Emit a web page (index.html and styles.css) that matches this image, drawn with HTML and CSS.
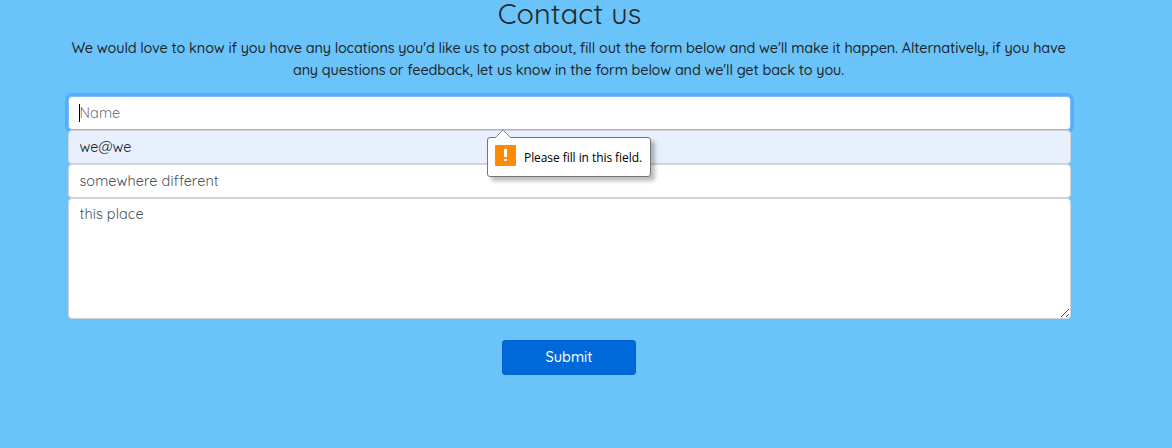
FILE: index.html
```html
<!DOCTYPE html>
<html lang="en">
<head>
<meta charset="utf-8">
<title>Contact us</title>
<link rel="stylesheet" href="styles.css">
</head>
<body>
<main class="contact">
  <h1 class="title">Contact us</h1>
  <p class="intro"><span class="line-one">We would love to know if you have any locations you'd like us to post about, fill out the form below and we'll make it happen. Alternatively, if you have</span><br><span class="line-two">any questions or feedback, let us know in the form below and we'll get back to you.</span></p>
  <form class="form">
    <div class="field focused"><span class="caret"></span><span class="name">Name</span>
      <div class="tip"><svg class="arrow" width="18" height="9" viewBox="0 0 18 9"><path d="M1 9 9 1l8 8" fill="#fff" stroke="#8a8a8a"/></svg><svg class="warn" width="21" height="21" viewBox="0 0 21 21"><rect width="21" height="21" rx="1" fill="#ff8c00"/><path d="M9 4h3v8H9zM9 14h3v2H9z" fill="#fff"/></svg><span class="tip-text">Please fill in this field.</span></div>
    </div>
    <div class="field filled"><span class="email">we@we</span></div>
    <div class="field"><span class="place">somewhere different</span></div>
    <div class="field message"><span class="note">this place</span><svg class="grip" width="10" height="10" viewBox="0 0 10 10"><path d="M1 9 9 1M6 9l3-3" stroke="#555" fill="none"/></svg></div>
    <button class="submit" type="button">Submit</button>
  </form>
</main>
</body>
</html>
```
FILE: styles.css
```css
* { box-sizing: border-box; }
body { margin: 0; background: #6ac4f9; font-family: Quicksand, Lato, "Liberation Sans", sans-serif; color: #212529; }
.contact { width: 1003px; margin-left: 68px; height: 448px; }
.title { margin: 0; height: 37px; font-size: 28.8px; line-height: 26px; font-weight: 380; text-align: center; letter-spacing: 0.12px; }
.intro { margin: 0 1px 0 -1px; height: 59px; font-size: 14.4px; line-height: 22px; font-weight: 500; text-align: center; white-space: nowrap; letter-spacing: -0.12px; }
.field { position: relative; height: 34px; display: flex; align-items: center; padding: 0 10.500px; background: #fff; border: 1px solid #ced4da; border-radius: 4px; font-size: 14.4px; font-weight: 370; letter-spacing: 0.1px; color: #495057; }
.focused { border-color: #80bdff; box-shadow: 0 0 0 3px #50b0fe; }
.filled { background: #e8f0fe; color: #212529; }
.email { letter-spacing: 0; }
.message { height: 121px; align-items: flex-start; padding-top: 6px; }
.name { color: #6c757d; }
.caret { position: absolute; left: 10px; top: 7px; width: 1px; height: 18px; background: #000; }
.grip { position: absolute; right: 0; bottom: 0; }
.tip { position: absolute; z-index: 5; left: 418px; top: 40px; width: 164px; height: 40px; display: flex; align-items: center; gap: 8px; padding-left: 7px; background: #fff; border: 1px solid #767676; border-radius: 3px; box-shadow: 4px 4px 4px #0004; font: 12px "Open Sans", sans-serif; letter-spacing: -0.07px; color: #000; white-space: nowrap; }
.arrow { position: absolute; top: -9px; left: 6px; }
.warn { position: relative; top: -2px; }
.submit { display: flex; align-items: center; justify-content: center; width: 134px; height: 35px; margin: 21px 0 0 434px; padding: 0 0 2px; border: 1px solid #0062cc; border-radius: 3px; background: #0069d9; color: #fff; font: 500 14.4px Quicksand, Lato, sans-serif; }
```
